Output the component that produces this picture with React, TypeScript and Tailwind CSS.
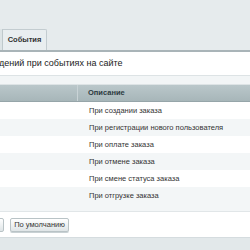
import React from "react";

const rows = [
  "При создании заказа",
  "При регистрации нового пользователя",
  "При оплате заказа",
  "При отмене заказа",
  "При смене статуса заказа",
  "При отгрузке заказа",
];

export default function App() {
  return (
    <div className="w-[250px] h-[250px] overflow-hidden bg-[#e6ebed] font-['Liberation_Sans',Arial,sans-serif] flex flex-col">
      <div className="h-[28px] shrink-0" />
      <div className="h-[22px] shrink-0 flex items-end">
        <div className="w-[3px] h-[21px] bg-[#dde4e6] border-r border-[#bfc9cc]" />
        <div className="w-[44px] h-[21px] bg-[#e9eef0] border-r border-t border-[#c3ccd0] rounded-tr-[2px] flex items-center justify-center text-[7.5px] font-bold text-[#333]">
          События
        </div>
      </div>
      <div className="h-[25px] shrink-0 bg-white border-t-2 border-[#a9b4b8] flex items-center">
        <span className="ml-[-1px] text-[9px] text-[#222] whitespace-nowrap">дений при событиях на сайте</span>
      </div>
      <div className="h-[10px] shrink-0 bg-[#f2f5f6] border-t border-b border-[#dde3e5]" />
      <div className="h-[17px] shrink-0 flex bg-gradient-to-b from-[#bac7ca] to-[#a7b6b9] border-b border-[#96a5a9]">
        <div className="w-[78px] border-r border-[#c9d3d6]" />
        <div className="pl-[10px] flex items-center text-[7.5px] font-bold text-[#2d3b3f]">Описание</div>
      </div>
      {rows.map((r, i) => (
        <div key={i} className={`h-[17px] shrink-0 flex items-center ${i % 2 === 0 ? "bg-white" : "bg-[#f3f6f7]"}`}>
          <div className="w-[89px]" />
          <span className="text-[7.5px] text-[#333] whitespace-nowrap">{r}</span>
        </div>
      ))}
      <div className="h-[8px] shrink-0 bg-[#f3f6f7] border-b border-[#e1e6e8]" />
      <div className="h-[25px] shrink-0 bg-white flex items-center">
        <div className="w-[6px] h-[14px] ml-[-2px] rounded-[2px] border border-[#b9c3c6] bg-gradient-to-b from-white to-[#dfe5e7]" />
        <div className="ml-[6px] w-[59px] h-[14px] rounded-[2px] border border-[#b9c3c6] bg-gradient-to-b from-white to-[#dfe5e7] shadow-[0_1px_0_#c9d1d4] flex items-center justify-center text-[7.5px] text-[#333]">
          По умолчанию
        </div>
      </div>
      <div className="flex-1 bg-[#e2e8ea] border-t border-[#d5dcdf]" />
    </div>
  );
}
